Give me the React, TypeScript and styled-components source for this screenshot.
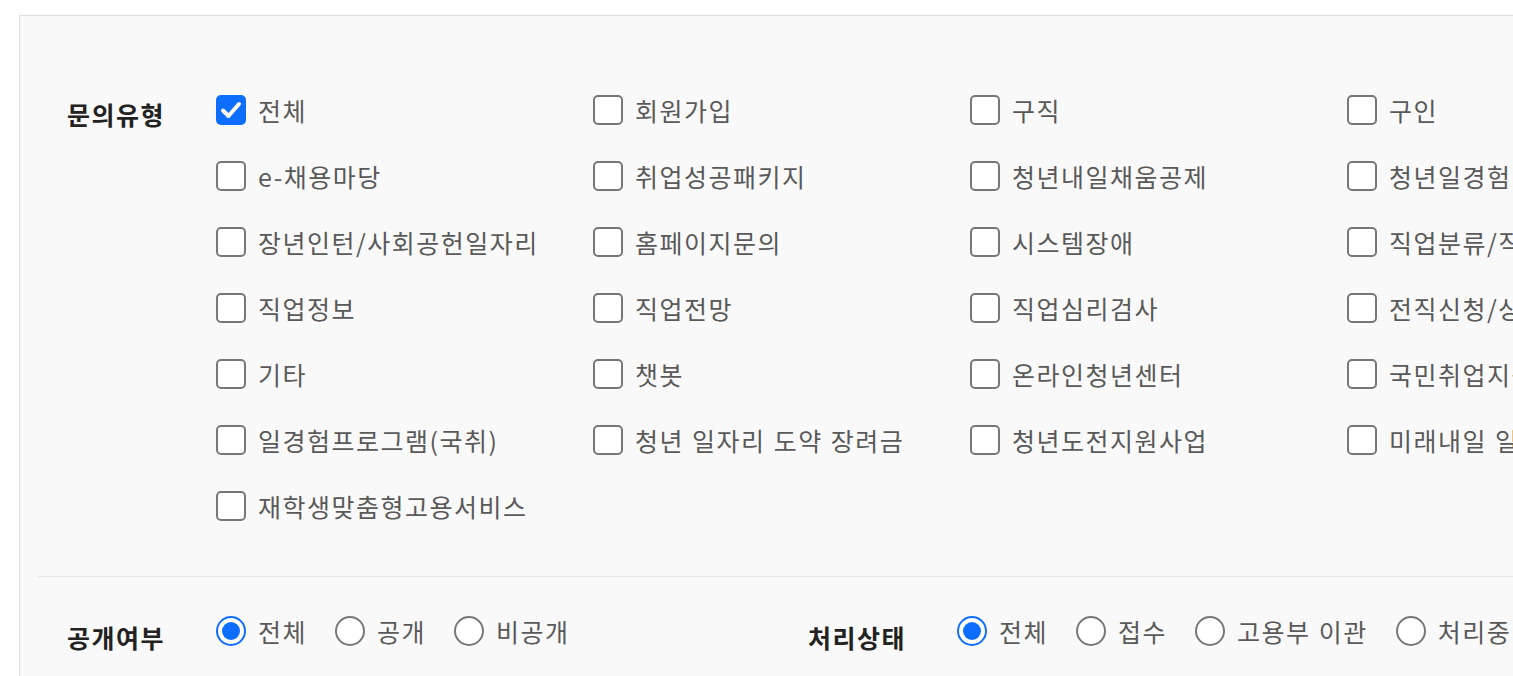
import React from "react";
import styled, { createGlobalStyle } from "styled-components";

const GlobalStyle = createGlobalStyle`
  html, body {
    margin: 0;
    padding: 0;
    background: #ffffff;
    overflow: hidden;
  }
  body {
    font-family: "Noto Sans CJK KR", "Noto Sans", sans-serif;
  }
`;

const Page = styled.div`
  padding: 15px 0 0 19px;
  width: 1900px;
`;

const Panel = styled.div`
  background: #f9f9f9;
  border: 1px solid #dedede;
  padding: 0 18px;
  width: 1860px;
  min-height: 700px;
`;

const TypeSection = styled.section`
  display: flex;
  align-items: flex-start;
  padding: 61px 0 37px;
  border-bottom: 1px solid #e6e6e6;
`;

const FieldLabel = styled.div<{ $width: number; $indent?: number }>`
  flex: 0 0 ${(p) => p.$width}px;
  box-sizing: border-box;
  padding-left: ${(p) => (p.$indent ?? 29)}px;
  font-size: 25px;
  font-weight: 700;
  color: #222;
  letter-spacing: 1.5px;
  line-height: 66px;
  padding-top: 4px;
`;

const CheckGrid = styled.div`
  display: grid;
  grid-template-columns: repeat(4, 377px);
  grid-auto-rows: 66px;
`;

const Option = styled.label`
  display: flex;
  align-items: center;
  gap: 12px;
  font-size: 25px;
  color: #595959;
  white-space: nowrap;
  letter-spacing: 1.5px;
  word-spacing: 1px;
  cursor: pointer;
`;

const CheckBox = styled.span<{ $checked?: boolean }>`
  flex: 0 0 30px;
  width: 30px;
  height: 30px;
  box-sizing: border-box;
  border-radius: 5px;
  border: ${(p) => (p.$checked ? "none" : "2px solid #777")};
  background: ${(p) => (p.$checked ? "#0d6efd" : "#fff")};
  display: flex;
  align-items: center;
  justify-content: center;
`;

const StatusSection = styled.section`
  display: flex;
  align-items: center;
  padding-top: 32px;
`;

const Field = styled.div<{ $width?: number }>`
  display: flex;
  align-items: center;
  flex: 0 0 ${(p) => (p.$width ? `${p.$width}px` : "auto")};
`;

const RadioGroup = styled.div`
  display: flex;
  align-items: center;
  gap: 28px;
  height: 32px;
`;

const Radio = styled.span<{ $checked?: boolean }>`
  flex: 0 0 30px;
  width: 30px;
  height: 30px;
  box-sizing: border-box;
  border-radius: 50%;
  border: 2px solid ${(p) => (p.$checked ? "#0d6efd" : "#777")};
  background: #fff;
  display: flex;
  align-items: center;
  justify-content: center;
  &::after {
    content: "";
    display: ${(p) => (p.$checked ? "block" : "none")};
    width: 18px;
    height: 18px;
    border-radius: 50%;
    background: #0d6efd;
  }
`;

const StatusLabel = styled(FieldLabel)`
  line-height: 32px;
  padding-top: 12px;
`;

const CheckMark = () => (
  <svg width="24" height="24" viewBox="0 0 24 24" aria-hidden="true">
    <polyline
      points="4,12.5 9.5,18 20,6"
      fill="none"
      stroke="#fff"
      strokeWidth="4"
      strokeLinecap="round"
      strokeLinejoin="round"
    />
  </svg>
);

const types = [
  "전체",
  "회원가입",
  "구직",
  "구인",
  "e-채용마당",
  "취업성공패키지",
  "청년내일채움공제",
  "청년일경험",
  "장년인턴/사회공헌일자리",
  "홈페이지문의",
  "시스템장애",
  "직업분류/직업사전",
  "직업정보",
  "직업전망",
  "직업심리검사",
  "전직신청/상담",
  "기타",
  "챗봇",
  "온라인청년센터",
  "국민취업지원제도",
  "일경험프로그램(국취)",
  "청년 일자리 도약 장려금",
  "청년도전지원사업",
  "미래내일 일경험",
  "재학생맞춤형고용서비스",
];

const openOpts = ["전체", "공개", "비공개"];
const statusOpts = ["전체", "접수", "고용부 이관", "처리중", "답변완료"];

export default function App() {
  return (
    <>
      <GlobalStyle />
      <Page>
        <Panel>
          <TypeSection>
            <FieldLabel $width={178}>문의유형</FieldLabel>
            <CheckGrid>
              {types.map((t, i) => (
                <Option key={t}>
                  <CheckBox $checked={i === 0}>{i === 0 && <CheckMark />}</CheckBox>
                  <span>{t}</span>
                </Option>
              ))}
            </CheckGrid>
          </TypeSection>
          <StatusSection>
            <Field $width={770}>
              <StatusLabel $width={178}>공개여부</StatusLabel>
              <RadioGroup>
                {openOpts.map((t, i) => (
                  <Option key={t}>
                    <Radio $checked={i === 0} />
                    <span>{t}</span>
                  </Option>
                ))}
              </RadioGroup>
            </Field>
            <Field>
              <StatusLabel $width={149} $indent={0}>처리상태</StatusLabel>
              <RadioGroup>
                {statusOpts.map((t, i) => (
                  <Option key={t}>
                    <Radio $checked={i === 0} />
                    <span>{t}</span>
                  </Option>
                ))}
              </RadioGroup>
            </Field>
          </StatusSection>
        </Panel>
      </Page>
    </>
  );
}
